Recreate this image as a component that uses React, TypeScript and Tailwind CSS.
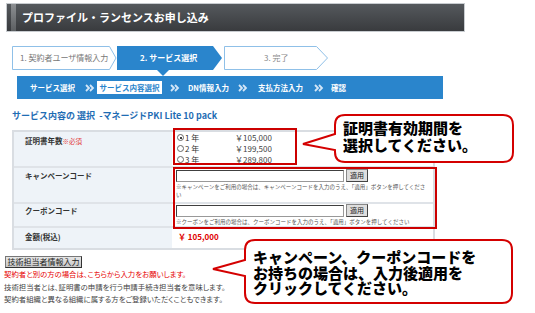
import React from "react";

const BLUE = "#2a85cc";

function Chevrons() {
  return (
    <svg width="10" height="8" viewBox="0 0 10 8" className="shrink-0">
      <polyline points="1,1 4,4 1,7" fill="none" stroke="#d3e6f7" strokeWidth="1.8" />
      <polyline points="5,1 8,4 5,7" fill="none" stroke="#d3e6f7" strokeWidth="1.8" />
    </svg>
  );
}

function Radio({ checked }: { checked?: boolean }) {
  return (
    <span className="relative inline-block h-[7px] w-[7px] shrink-0 rounded-full border border-[#666] bg-white">
      {checked && <span className="absolute left-[1.5px] top-[1.5px] h-[2px] w-[2px] rounded-full bg-black" />}
    </span>
  );
}

function CodeInput() {
  return (
    <div className="flex items-center">
      <input
        readOnly
        className="h-[12px] w-[168px] border border-[#999] border-l-[#404040] border-t-[#404040] bg-white outline-none"
      />
      <button className="ml-[2px] h-[13px] w-[22px] border border-[#888] border-b-[#444] border-r-[#444] bg-[#dedede] text-[7px] leading-none text-[#222]">
        適用
      </button>
    </div>
  );
}

const years = [
  { label: "1 年", price: "￥105,000", checked: true },
  { label: "2 年", price: "￥199,500" },
  { label: "3 年", price: "￥289,800" },
];

export default function App() {
  return (
    <div className="relative h-[313px] w-[535px] overflow-hidden bg-white font-['Noto_Sans_CJK_JP',sans-serif] text-[#333]">
      {/* Page header */}
      <div className="ml-[6px] mt-[3px] flex h-[29px] w-[459px] items-center border border-[#c8ccd0] bg-gradient-to-b from-[#55595d] to-[#393b3e]">
        <div className="ml-[4px] h-full w-[5px] bg-gradient-to-b from-[#8c8f92] to-[#5c5f62]" />
        <h1 className="ml-[6px] text-[11px] font-bold leading-none text-white">プロファイル・ランセンスお申し込み</h1>
      </div>

      {/* Steps */}
      <div className="ml-[12px] mt-[14px] flex h-[24px]">
        <div className="relative h-[24px] w-[105px]">
          <svg className="absolute left-0 top-0" width="105" height="24">
            <polygon points="0.5,0.5 97.5,0.5 104,12 97.5,23.5 0.5,23.5" fill="#fff" stroke="#8fc0e8" />
          </svg>
          <span className="relative block pl-[8px] text-[8px] leading-[24px] text-[#777]">1. 契約者ユーザ情報入力</span>
        </div>
        <div className="relative h-[24px] w-[107px]">
          <svg className="absolute left-0 top-0 overflow-visible" width="107" height="30">
            <polygon points="0,0 96,0 105,12 96,24 0,24" fill={BLUE} />
            <polygon points="40,24 52,24 46,30" fill={BLUE} />
          </svg>
          <span className="relative block pl-[23px] text-[8px] font-bold leading-[24px] text-white">2. サービス選択</span>
        </div>
        <div className="relative h-[24px] w-[105px]">
          <svg className="absolute left-0 top-0" width="105" height="24">
            <polygon points="0.5,0.5 92.5,0.5 103.5,12 92.5,23.5 0.5,23.5" fill="#fff" stroke="#8fc0e8" />
          </svg>
          <span className="relative block pl-[40px] text-[8px] leading-[24px] text-[#888]">3. 完了</span>
        </div>
      </div>

      {/* Sub navigation */}
      <div className="ml-[17px] mt-[6px] flex h-[23px] w-[426px] items-center bg-[#2a85cc] text-[7.5px] font-bold text-white">
        <span className="ml-[13px]">サービス選択</span>
        <span className="ml-[10px]"><Chevrons /></span>
        <span className="ml-[2px] bg-white px-[2.5px] py-[1.5px] leading-[10px] text-[#2a85cc]">サービス内容選択</span>
        <span className="ml-[8px]"><Chevrons /></span>
        <span className="ml-[8px]">DN情報入力</span>
        <span className="ml-[9px]"><Chevrons /></span>
        <span className="ml-[10px]">支払方法入力</span>
        <span className="ml-[11px]"><Chevrons /></span>
        <span className="ml-[7px]">確認</span>
      </div>

      <h2 className="ml-[12px] mt-[11px] text-[9px] font-bold leading-[12px] text-[#1f6db4]">
        サービス内容の 選択 &nbsp;-マネージドPKI Lite 10 pack
      </h2>

      {/* Form table */}
      <div className="ml-[12px] mt-[8px] w-[423px] border-2 border-[#d9dde2]">
        <div className="flex h-[36px] border-b-2 border-[#dfe3e8]">
          <div className="w-[158px] bg-[#eef3f8] pl-[11px] pt-[4px] text-[7.5px] font-bold leading-[10px]">
            証明書年数<span className="text-[6.5px] font-normal text-[#e23a3a]">※必須</span>
          </div>
          <div className="flex-1 pl-[5px] text-[8px] leading-[11px]">
            {years.map((y) => (
              <div key={y.label} className="flex items-center">
                <Radio checked={y.checked} />
                <span className="ml-px w-[50px]">{y.label}</span>
                <span className="text-[#444]">{y.price}</span>
              </div>
            ))}
          </div>
        </div>
        <div className="flex h-[36px] border-b-2 border-[#dfe3e8]">
          <div className="w-[158px] bg-[#eef3f8] pl-[11px] pt-[3px] text-[7.5px] font-bold leading-[10px]">
            キャンペーンコード
          </div>
          <div className="flex-1 pl-[4px] pt-[1px]">
            <CodeInput />
            <p className="mt-[1px] text-[5.5px] leading-[8px] text-[#555]">
              ※キャンペーンをご利用の場合は、キャンペーンコードを入力のうえ、「適用」ボタンを押してくださ
              <br />い
            </p>
          </div>
        </div>
        <div className="flex h-[24px] border-b-2 border-[#dfe3e8]">
          <div className="w-[158px] bg-[#eef3f8] pl-[11px] pt-[2px] text-[7.5px] font-bold leading-[10px]">
            クーポンコード
          </div>
          <div className="flex-1 pl-[4px]">
            <CodeInput />
            <p className="mt-[1px] text-[5.5px] leading-[8px] text-[#555]">
              ※クーポンをご利用の場合は、クーポンコードを入力のうえ、「適用」ボタンを押してください
            </p>
          </div>
        </div>
        <div className="flex h-[20px]">
          <div className="w-[158px] bg-[#eef3f8] pl-[11px] pt-[4px] text-[7.5px] font-bold leading-[10px]">
            金額(税込)
          </div>
          <div className="flex-1 pl-[6px] pt-[4px] text-[8px] font-bold leading-[10px] text-[#e00000]">
            ￥ 105,000
          </div>
        </div>
      </div>

      <button className="ml-[5px] mt-[6px] block h-[12px] w-[77px] border border-[#777] border-b-[#333] border-r-[#333] bg-gradient-to-b from-[#e6e6e6] to-[#c6c6c6] text-[8px] leading-none text-[#222]">
        技術担当者情報入力
      </button>
      <div className="ml-[4px] text-[7.4px] leading-[12.5px] [font-feature-settings:'palt']">
        <p className="text-[#e60000]">契約者と別の方の場合は、こちらから入力をお願いします。</p>
        <p className="text-[#444]">技術担当者とは、証明書の申請を行う申請手続き担当者を意味します。</p>
        <p className="text-[#444]">契約者組織と異なる組織に属する方をご登録いただくこともできます。</p>
      </div>

      {/* Annotation boxes */}
      <div className="absolute left-[173px] top-[128px] h-[37px] w-[124px] border-2 border-[#cc0000]" />
      <div className="absolute left-[173px] top-[167px] h-[62px] w-[264px] border-2 border-[#cc0000]" />

      {/* Callout 1 */}
      <div className="absolute left-[300px] top-[112px] h-[53px] w-[216px]">
        <svg className="absolute left-0 top-0" width="216" height="53" viewBox="300 112 216 53">
          <path
            d="M345,115 L503,115 Q513,115 513,125 L513,152 Q513,162 503,162 L345,162 Q335,162 335,152 L335,150 L303,144 L335,134 L335,125 Q335,115 345,115 Z"
            fill="#fff"
            stroke="#d40000"
            strokeWidth="2"
          />
        </svg>
        <div className="relative pl-[43px] pt-[7px] text-[15px] font-black leading-[17px] text-black">
          証明書有効期間を
          <br />
          選択してください。
        </div>
      </div>

      {/* Callout 2 */}
      <div className="absolute left-[210px] top-[237px] h-[70px] w-[306px]">
        <svg className="absolute left-0 top-0" width="306" height="70" viewBox="210 237 306 70">
          <path
            d="M255,240 L502,240 Q512,240 512,250 L512,293 Q512,303 502,303 L255,303 Q245,303 245,293 L245,276 L213,269 L245,260 L245,250 Q245,240 255,240 Z"
            fill="#fff"
            stroke="#d40000"
            strokeWidth="2"
          />
        </svg>
        <div className="relative pl-[43px] pt-[12px] text-[15px] font-black leading-[15.5px] text-black">
          キャンペーン、クーポンコードを
          <br />
          お持ちの場合は、入力後適用を
          <br />
          クリックしてください。
        </div>
      </div>
    </div>
  );
}
